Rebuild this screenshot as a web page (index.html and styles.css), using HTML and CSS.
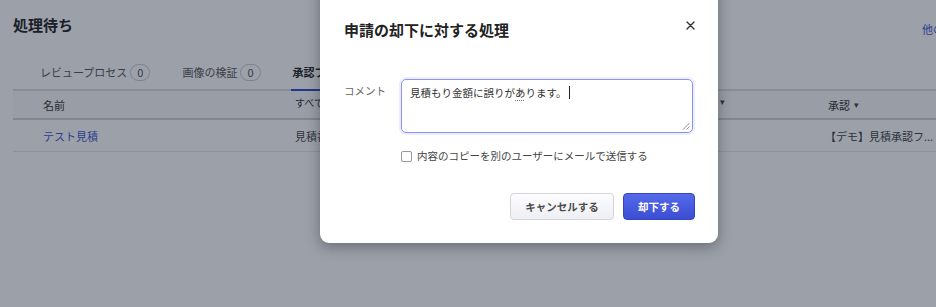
FILE: index.html
```html
<!DOCTYPE html>
<html lang="ja">
<head>
<meta charset="utf-8">
<title>処理待ち</title>
<link rel="stylesheet" href="styles.css">
</head>
<body>
<div class="page">
  <header class="page-header">
    <h1 class="page-title">処理待ち</h1>
    <a class="other-link" href="#">他の</a>
  </header>
  <nav class="tabs">
    <div class="tab"><span>レビュープロセス</span><span class="badge">0</span></div>
    <div class="tab"><span>画像の検証</span><span class="badge">0</span></div>
    <div class="tab active"><span>承認フロー</span><span class="badge">1</span></div>
  </nav>
  <div class="table">
    <div class="th name">名前</div>
    <div class="th filter">すべて</div>
    <div class="th filter col3">すべて <span class="caret">▾</span></div>
    <div class="th">承認 <span class="caret">▾</span></div>
    <div class="td"><a class="link" href="#">テスト見積</a></div>
    <div class="td">見積書</div>
    <div class="td"></div>
    <div class="td last">【デモ】見積承認フ...</div>
  </div>
  <div class="overlay"></div>
  <div class="modal">
    <div class="modal-head">
      <h2 class="modal-title">申請の却下に対する処理</h2>
      <button class="close" aria-label="閉じる">
        <svg width="9" height="9" viewBox="0 0 9 9"><path d="M1 1L8 8M8 1L1 8" stroke="#333" stroke-width="1.4" stroke-linecap="round"/></svg>
      </button>
    </div>
    <div class="form-row">
      <label class="form-label">コメント</label>
      <div class="textarea">
        <span>見積もり金額に誤りが<span class="ime">あ</span>ります。</span><span class="text-caret"></span>
        <svg class="grip" width="9" height="9" viewBox="0 0 9 9"><path d="M8.5 2L2 8.5M8.5 5.5L5.5 8.5" stroke="#888" stroke-width="0.9"/></svg>
      </div>
    </div>
    <div class="check-row">
      <span class="checkbox"></span>
      <span class="check-label">内容のコピーを別のユーザーにメールで送信する</span>
    </div>
    <div class="actions">
      <button class="btn btn-cancel">キャンセルする</button>
      <button class="btn btn-primary">却下する</button>
    </div>
  </div>
</div>
</body>
</html>
```
FILE: styles.css
```css
* { box-sizing: border-box; }
html, body { margin: 0; padding: 0; }
body {
  font-family: "Noto Sans CJK JP", "Noto Sans", sans-serif;
  font-size: 11px;
  color: #333;
  background: #fff;
}
.page {
  position: relative;
  width: 936px;
  height: 307px;
  overflow: hidden;
  background: #fff;
}
.page-header {
  display: flex;
  justify-content: space-between;
  align-items: flex-start;
  padding: 15px 0 0 13px;
  margin-right: -8px;
  height: 55px;
}
.page-title {
  margin: 0;
  font-size: 15px;
  line-height: 20px;
  font-weight: 700;
  color: #222;
}
.other-link {
  color: #3c56d6;
  text-decoration: none;
  font-size: 11px;
  line-height: 16px;
  margin-top: 6px;
}
.tabs {
  display: flex;
  margin-left: 13px;
  padding-left: 25px;
  border-bottom: 2px solid #dcdde2;
  height: 36px;
  gap: 28px;
}
.tab {
  display: flex;
  align-items: center;
  padding: 0 2px;
  color: #555;
  height: 36px;
  border-bottom: 2px solid transparent;
  margin-bottom: -2px;
}
.tab.active {
  color: #222;
  font-weight: 700;
  border-bottom-color: #2f4bd6;
}
.badge {
  display: inline-flex;
  align-items: center;
  justify-content: center;
  margin-left: 3px;
  min-width: 20px;
  height: 17px;
  padding: 0 6px;
  border: 1px solid #c8c9ce;
  border-radius: 9px;
  font-weight: 400;
  color: #555;
}
.table {
  display: grid;
  grid-template-columns: 282px 265px 268px 1fr;
  margin-left: 13px;
}
.th {
  height: 29px;
  background: #fafafa;
  border-bottom: 2px solid #cfd0d5;
  display: flex;
  align-items: center;
  color: #333;
  white-space: nowrap;
}
.th.name { padding-left: 30px; }
.th.filter { align-items: flex-start; padding-top: 4px; font-size: 10px; }
.th.col3 { padding-left: 127px; }
.caret { font-size: 9px; margin-left: 4px; color: #444; }
.td {
  height: 32px;
  border-bottom: 1px solid #e6e6ea;
  display: flex;
  align-items: center;
  white-space: nowrap;
  color: #444;
}
.table .td:nth-child(5) { padding-left: 30px; }
.link { color: #3b55d4; text-decoration: none; }
.td.last { margin-left: -3px; }
.overlay {
  position: absolute;
  inset: 0;
  background: rgba(20, 28, 48, 0.42);
}
.modal {
  position: absolute;
  left: 320px;
  top: -20px;
  width: 398px;
  height: 263px;
  background: #fff;
  border-radius: 9px;
  box-shadow: 0 4px 14px rgba(10, 15, 30, 0.35);
  padding: 40px 23px 23px 24px;
  display: flex;
  flex-direction: column;
  font-size: 10.5px;
}
.modal-head {
  display: flex;
  justify-content: space-between;
  align-items: flex-start;
  height: 20px;
}
.modal-title {
  margin: 0;
  font-size: 15px;
  line-height: 20px;
  font-weight: 700;
  color: #222;
}
.close {
  border: 0;
  background: none;
  padding: 0;
  margin: 1px 0 0 0;
  width: 9px;
  height: 9px;
  display: flex;
}
.form-row {
  display: flex;
  margin-top: 39px;
}
.form-label {
  width: 57px;
  padding-top: 4px;
  line-height: 16px;
  color: #666;
}
.textarea {
  position: relative;
  width: 292px;
  height: 54px;
  border: 1.5px solid #8d92f2;
  border-radius: 5px;
  box-shadow: 0 0 0 2px rgba(125, 135, 240, 0.15);
  padding: 5px 8px;
  line-height: 16px;
  color: #333;
}
.ime {
  text-decoration: underline dotted #777;
  text-underline-offset: 3px;
}
.text-caret {
  display: inline-block;
  width: 1px;
  height: 13px;
  background: #222;
  margin-left: 3px;
  vertical-align: -2px;
}
.grip {
  position: absolute;
  right: 2px;
  bottom: 2px;
}
.check-row {
  display: flex;
  align-items: center;
  margin-top: 15px;
  margin-left: 57px;
  height: 16px;
}
.checkbox {
  width: 11px;
  height: 11px;
  border: 1px solid #999;
  border-radius: 2px;
  background: #fff;
  margin-right: 5px;
}
.check-label { color: #444; line-height: 16px; }
.actions {
  display: flex;
  justify-content: flex-end;
  gap: 9px;
  margin-top: auto;
}
.btn {
  height: 27px;
  border-radius: 4px;
  font-family: inherit;
  font-size: 10.5px;
  font-weight: 700;
  padding: 0;
}
.btn-cancel {
  width: 104px;
  background: linear-gradient(#fdfdff, #eeeff4);
  border: 1px solid #d4d5dc;
  color: #4a4a4a;
}
.btn-primary {
  width: 72px;
  background: linear-gradient(#5569ea, #3b4ed3);
  border: 1px solid #3445c2;
  color: #fff;
}
```
